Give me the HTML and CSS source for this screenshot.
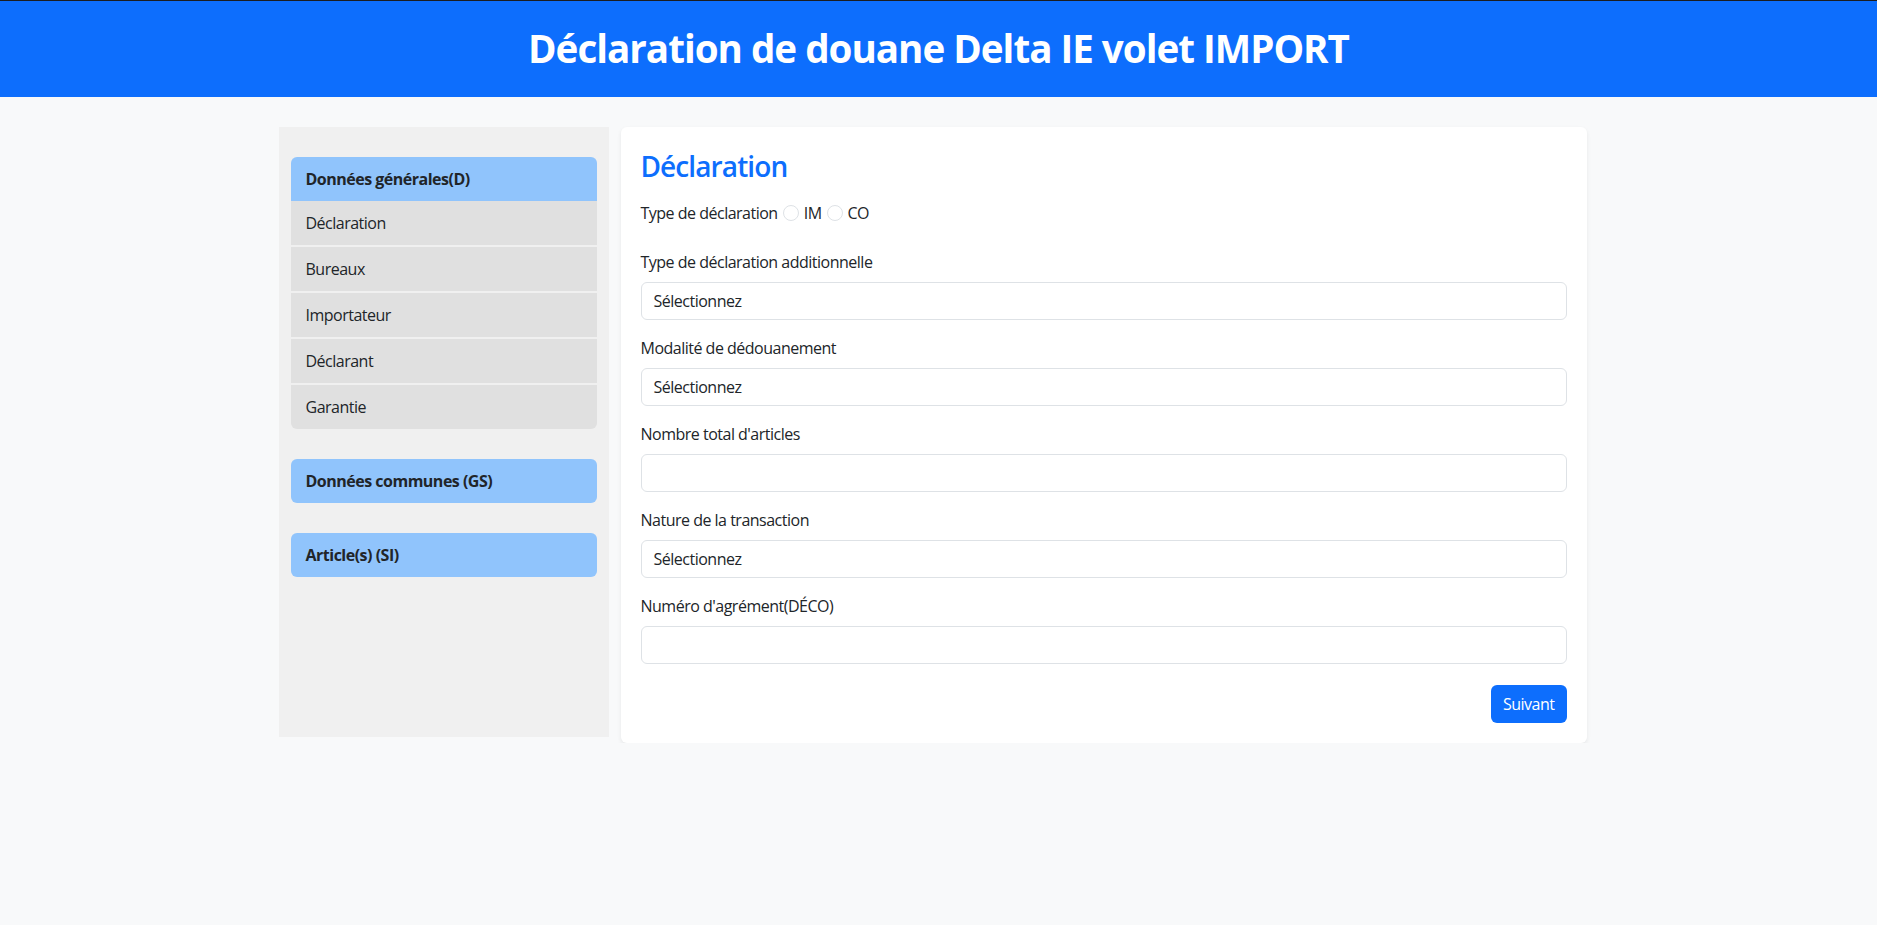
FILE: index.html
```html
<!DOCTYPE html>
<html lang="fr">
<head>
<meta charset="utf-8">
<title>Déclaration de douane Delta IE volet IMPORT</title>
<link rel="stylesheet" href="styles.css">
</head>
<body>
<header class="topbar">
  <h1 class="topbar-title">Déclaration de douane Delta IE volet IMPORT</h1>
</header>
<main class="container">
  <aside class="sidebar">
    <section class="nav-group">
      <div class="nav-head">Données générales(D)</div>
      <div class="nav-list">
        <div class="nav-item">Déclaration</div>
        <div class="nav-item">Bureaux</div>
        <div class="nav-item">Importateur</div>
        <div class="nav-item">Déclarant</div>
        <div class="nav-item">Garantie</div>
      </div>
    </section>
    <section class="nav-group">
      <div class="nav-head solo">Données communes (GS)</div>
    </section>
    <section class="nav-group">
      <div class="nav-head solo">Article(s) (SI)</div>
    </section>
  </aside>
  <div class="content">
    <div class="card">
      <h2 class="card-title">Déclaration</h2>
      <div class="radio-row">
        <span>Type de déclaration</span>
        <span class="radio"></span><span>IM</span>
        <span class="radio"></span><span>CO</span>
      </div>
      <div class="field">
        <label class="field-label">Type de déclaration additionnelle</label>
        <div class="control">Sélectionnez</div>
      </div>
      <div class="field">
        <label class="field-label">Modalité de dédouanement</label>
        <div class="control">Sélectionnez</div>
      </div>
      <div class="field">
        <label class="field-label">Nombre total d'articles</label>
        <div class="control"></div>
      </div>
      <div class="field">
        <label class="field-label">Nature de la transaction</label>
        <div class="control">Sélectionnez</div>
      </div>
      <div class="field">
        <label class="field-label">Numéro d'agrément(DÉCO)</label>
        <div class="control"></div>
      </div>
      <div class="actions">
        <button class="btn">Suivant</button>
      </div>
    </div>
  </div>
</main>
</body>
</html>
```
FILE: styles.css
```css
* { box-sizing: border-box; }
body {
  margin: 0;
  background: #f8f9fa;
  font-family: "Open Sans", "Noto Sans", sans-serif;
  font-size: 16px;
  letter-spacing: -0.5px;
  color: #212529;
  line-height: 24px;
}
.topbar {
  border-top: 1px solid #1b1d20;
  background: #0d6efd;
  height: 97px;
  display: flex;
  align-items: center;
  justify-content: center;
}
.topbar-title {
  margin: 0;
  color: #fff;
  font-size: 38.6px;
  font-weight: 700;
  letter-spacing: -1px;
  line-height: 48px;
  position: relative;
  top: -1px;
}
.container {
  width: 1320px;
  margin: 30px auto 0;
  display: flex;
  align-items: flex-start;
}
.sidebar {
  width: 330px;
  min-height: 610px;
  background: #f0f0f0;
  padding: 30px 12px;
  display: flex;
  flex-direction: column;
  gap: 30px;
}
.nav-head {
  height: 44px;
  background: #90c4fc;
  border-radius: 6px 6px 0 0;
  font-weight: 700;
  padding: 0 15px;
  display: flex;
  align-items: center;
}
.nav-head.solo { border-radius: 6px; }
.nav-list {
  display: flex;
  flex-direction: column;
  gap: 2px;
  border-radius: 0 0 6px 6px;
  overflow: hidden;
}
.nav-item {
  height: 44px;
  background: #e0e0e0;
  padding: 0 15px;
  display: flex;
  align-items: center;
}
.content {
  width: 990px;
  padding: 0 12px;
}
.card {
  background: #fff;
  border-radius: 6px;
  box-shadow: 0 2px 4px rgba(0, 0, 0, 0.075);
  padding: 20px;
}
.card-title {
  margin: 0 0 16px;
  color: #0d6efd;
  font-size: 28px;
  font-weight: 600;
  letter-spacing: -0.9px;
  line-height: 38px;
}
.radio-row {
  display: flex;
  align-items: center;
  margin-bottom: 25px;
}
.radio {
  width: 16px;
  height: 16px;
  border: 1px solid #dee2e6;
  border-radius: 50%;
  margin: 0 5px;
}
.field { margin-bottom: 16px; }
.field-label {
  display: block;
  margin-bottom: 8px;
}
.control {
  height: 38px;
  border: 1px solid #dee2e6;
  border-radius: 6px;
  padding: 6px 12px;
}
.actions {
  display: flex;
  justify-content: flex-end;
  margin-top: 21px;
}
.btn {
  height: 38px;
  padding: 6px 12px;
  border: none;
  border-radius: 6px;
  background: #0d6efd;
  color: #fff;
  font: inherit;
  letter-spacing: -0.5px;
}
```
